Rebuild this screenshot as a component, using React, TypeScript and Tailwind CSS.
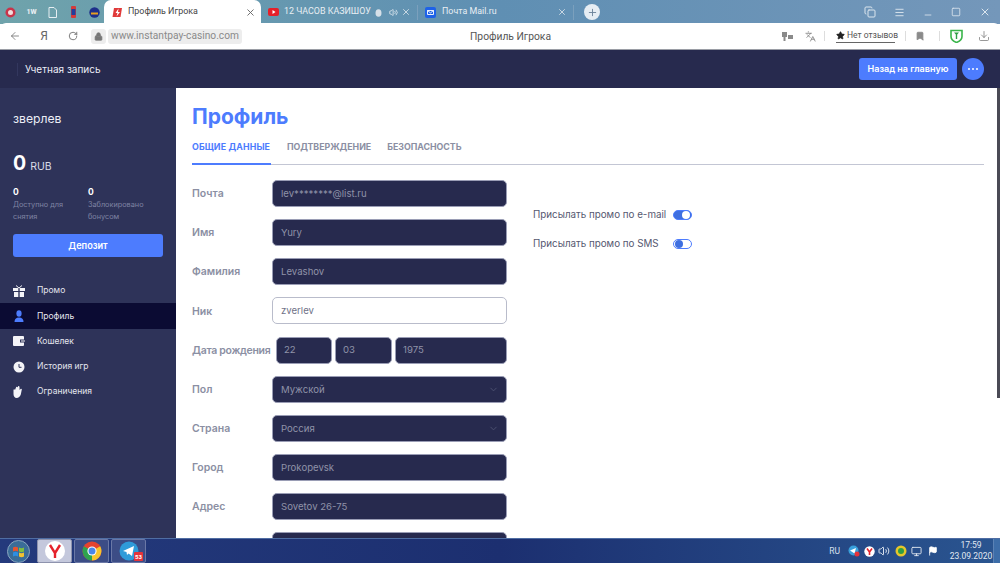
import React from "react";
import { ArrowLeft, RotateCw, Lock, X, Plus, ChevronDown, Menu, Minus, Square, Download, Bookmark, Volume2, Copy, Languages, Flag, Monitor, Star } from "lucide-react";

const chrome = "font-['Roboto',sans-serif]";

function Field({ label, value, active, select }: { label: string; value: string; active?: boolean; select?: boolean }) {
  return (
    <div className="flex items-center h-[27px] mb-[12.16px]">
      <div className="w-20 shrink-0 text-[10.5px] font-semibold text-[#8b8fa3] pt-px">{label}</div>
      <div className={`w-[235px] h-[27px] rounded-[5px] border flex items-center justify-between px-2 text-[9.6px] ${active ? "bg-white border-[#b9bccb] text-[#6f7287]" : "bg-[#272a4e] border-[#9a9db5] text-[#8f92a8]"}`}>
        <span className="pt-px">{value}</span>
        {select && <ChevronDown size={11} className="text-[#4e5272] mr-[-1px]" />}
      </div>
    </div>
  );
}

function DateBox({ value, w }: { value: string; w: string }) {
  return <div className={`${w} h-[27px] rounded-[5px] border border-[#9a9db5] bg-[#272a4e] flex items-center px-[7px] pt-px text-[9.6px] text-[#8f92a8]`}>{value}</div>;
}

function Toggle({ on }: { on: boolean }) {
  return (
    <div className={`w-[19px] h-[10px] rounded-full border border-[#4d7cfe] flex items-center px-[1px] ${on ? "bg-[#3f6fe0] justify-end" : "bg-white justify-start"}`}>
      <div className={`w-[8px] h-[8px] rounded-full ${on ? "bg-white" : "bg-[#3f6fe0]"}`} />
    </div>
  );
}

function NavRow({ icon, label, active }: { icon: React.ReactNode; label: string; active?: boolean }) {
  return (
    <div className={`h-[25.3px] flex items-center pl-[13px] text-[8.5px] ${active ? "bg-[#0b0b33]" : ""}`}>
      <span className="w-[24px] flex items-center">{icon}</span>
      <span className="text-[#e4e5ee]">{label}</span>
    </div>
  );
}

function TabFav({ children }: { children: React.ReactNode }) {
  return <div className="w-[21px] flex justify-center items-center shrink-0">{children}</div>;
}

function YLogo() {
  return (
    <svg width="22" height="22" viewBox="0 0 22 22">
      <circle cx="11" cy="11" r="10" fill="#fff" />
      <path d="M6 5l5 8v5M16 5l-5 8" stroke="#e5222b" strokeWidth="2.4" fill="none" />
    </svg>
  );
}

export default function App() {
  return (
    <div className="w-[1000px] h-[563px] flex flex-col overflow-hidden bg-white">
      {/* tab strip */}
      <div className={`h-[24px] shrink-0 flex items-center bg-gradient-to-r from-[#6fa3ab] via-[#5f8fb3] to-[#7497ba] text-[8.9px] ${chrome}`}>
        <div className="w-[104px] flex items-center shrink-0">
          <TabFav><svg width="11" height="11" viewBox="0 0 11 11"><circle cx="5.5" cy="5.5" r="5" fill="#c8344a" /><circle cx="5.5" cy="5.5" r="2.5" fill="#f3dcdc" /></svg></TabFav>
          <TabFav><span className="text-[7px] font-extrabold text-[#e8eef2]">1W</span></TabFav>
          <TabFav><svg width="9" height="11" viewBox="0 0 9 11"><path d="M1 .5h5l2.5 2.500v7.500H1z" fill="none" stroke="#e6eef2" /></svg></TabFav>
          <TabFav><svg width="7" height="12" viewBox="0 0 7 12"><rect x="1" width="5" height="12" rx="1" fill="#d33a3a" /><rect x="1.500" y="3" width="4" height="6" fill="#1f3f9e" /></svg></TabFav>
          <TabFav><svg width="11" height="11" viewBox="0 0 11 11"><circle cx="5.5" cy="5.5" r="5.2" fill="#1d2f8a" /><path d="M2 6.500h7" stroke="#e8a020" strokeWidth="2" /></svg></TabFav>
        </div>
        <div className="w-[157px] h-[24px] bg-white rounded-t-[7px] flex items-center pl-[8px] pr-[5px] shrink-0 text-[#444]">
          <svg width="11" height="11" viewBox="0 0 11 11"><path d="M2 1h8L8.500 10H.5z" fill="#e03a3a" /><path d="M6.500 1.500L3.500 6h2L4.500 9.500 8 5H6z" fill="#fff" /></svg>
          <span className="ml-[5px] flex-1">Профиль Игрока</span>
          <X size={11} className="text-[#666]" />
        </div>
        <div className="w-[157px] flex items-center pl-[7px] pr-[6px] text-[#e8eef3] shrink-0 border-r border-[#7ba0bd] h-[15px]">
          <svg width="11" height="8" viewBox="0 0 11 8"><rect width="11" height="8" rx="2" fill="#e5202a" /><path d="M4.500 2l3 2-3 2z" fill="#fff" /></svg>
          <span className="ml-[5px] flex-1 whitespace-nowrap">12 ЧАСОВ КАЗИШОУ</span>
          <svg width="7" height="10" viewBox="0 0 7 10"><ellipse cx="3.500" cy="6" rx="3" ry="3.800" fill="#d6e0e8" /></svg>
          <Volume2 size={9} className="ml-[7px] text-[#eef3f7]" />
          <X size={10} className="ml-[3px] text-[#dbe5ec]" />
        </div>
        <div className="w-[156px] flex items-center pl-[7px] pr-[6px] text-[#e8eef3] shrink-0 border-r border-[#7ba0bd] h-[15px]">
          <svg width="11" height="11" viewBox="0 0 11 11"><rect width="11" height="11" rx="2" fill="#1e62e8" /><path d="M2.500 3.500h6v4h-6z M2.500 3.500l3 2.400 3-2.400" stroke="#fff" strokeWidth="0.9" fill="none" /></svg>
          <span className="ml-[6px] flex-1">Почта Mail.ru</span>
          <X size={10} className="text-[#dbe5ec]" />
        </div>
        <div className="w-[16px] h-[16px] ml-[10px] rounded-full bg-[#e6edf3] flex items-center justify-center shrink-0">
          <Plus size={11} className="text-[#6b8299]" />
        </div>
        <div className="flex-1 flex justify-end items-center gap-[18px] pr-[9px] text-[#dce6ee]">
          <Copy size={12} />
          <Menu size={11} />
          <Minus size={10} className="mt-[5px]" />
          <Square size={10} />
          <X size={12} />
        </div>
      </div>

      {/* toolbar */}
      <div className={`h-[27px] shrink-0 bg-white rounded-t-[6px] -mt-[1px] flex items-center relative text-[#555] ${chrome} border-b border-[#9a9da5]`}>
        <ArrowLeft size={12} className="ml-[9px] text-[#666]" strokeWidth={1.5} />
        <span className="ml-[18px] text-[12px] text-[#666] w-[10px] text-center">Я</span>
        <RotateCw size={10} className="ml-[19px] text-[#666]" />
        <div className="ml-[13px] w-[15px] h-[15px] bg-[#ededed] rounded-[3px] flex items-center justify-center"><Lock size={9} className="text-[#777] fill-[#777]" /></div>
        <div className="ml-[2px] h-[15px] w-[134px] bg-[#ededed] rounded-[3px] flex items-center justify-center text-[10.2px] text-[#8a8a8a] whitespace-nowrap">www.instantpay-casino.com</div>
        <div className="absolute left-[470px] top-[6px] text-[10.3px] text-[#555]">Профиль Игрока</div>
        <div className="ml-auto flex items-center text-[#8a8a8a]">
          <svg width="11" height="11" viewBox="0 0 11 11" className="mr-[12px]"><path d="M0 1h5v5H3.500v4h-2V6H0zM6 4h5v4H6z" fill="#8a8a8a" /></svg>
          <Languages size={11} className="mr-[8px]" />
          <div className="w-px h-[10px] bg-[#ddd] mr-[11px]" />
          <div className="flex items-center border-b border-[#666] h-[14px] text-[8.5px] text-[#555] mr-[10px] w-[59px] gap-[2px] whitespace-nowrap">
            <Star size={9} className="fill-[#222] text-[#222] shrink-0" /> Нет отзывов
          </div>
          <div className="w-px h-[10px] bg-[#ddd] mr-[9px]" />
          <Bookmark size={10} className="fill-[#8a8a8a] mr-[14px]" />
          <div className="w-px h-[10px] bg-[#ddd] mr-[10px]" />
          <svg width="13" height="14" viewBox="0 0 13 14" className="mr-[15px]"><path d="M1 1.500h11v6c0 3-3 5-5.500 6C4 12.500 1 10.500 1 7.500z" fill="#fff" stroke="#3ab54a" strokeWidth="1.6" /><path d="M4 3.500h5L7.200 5.500V10H5.800V5.500z" fill="#2d9e43" /></svg>
          <Download size={12} className="mr-[10px] text-[#777]" strokeWidth={1.5} />
        </div>
      </div>

      {/* page */}
      <div className="flex-1 min-h-0 flex flex-col relative font-['Inter',sans-serif]">
        <header className="h-[38px] shrink-0 bg-[#272a4e] flex items-center pl-[17px] pr-[16px]">
          <div className="w-px h-[13px] bg-[#33375e] mr-[7px]" />
          <span className="text-[10px] text-[#eceef6]">Учетная запись</span>
          <button className="ml-auto w-[98px] h-[22px] bg-[#4d7cfe] rounded-[3px] text-white text-[9px] font-semibold">Назад на главную</button>
          <div className="ml-[5px] w-[22px] h-[22px] rounded-full bg-[#4d7cfe] flex items-center justify-center gap-[1.5px]">
            <i className="w-[2.5px] h-[2.5px] rounded-full bg-white" /><i className="w-[2.5px] h-[2.5px] rounded-full bg-white" /><i className="w-[2.5px] h-[2.5px] rounded-full bg-white" />
          </div>
        </header>
        <div className="flex-1 min-h-0 flex">
          <aside className="w-[176px] shrink-0 bg-[#2e3359]">
            <div className="px-[13px] pt-[23px]">
              <div className="text-[12.2px] text-[#eceef6] leading-[16px]">зверлев</div>
              <div className="mt-[24px] flex items-baseline">
                <span className="text-[19.5px] font-bold text-white leading-[24px]">0</span>
                <span className="ml-[4px] text-[10.5px] text-[#d9dbe8]">RUB</span>
              </div>
              <div className="mt-[11px] flex">
                <div className="w-[75px]">
                  <div className="text-[8.5px] font-bold text-white leading-[12px]">0</div>
                  <div className="text-[7.3px] text-[#7f83a3] leading-[12px] mt-px">Доступно для<br />снятия</div>
                </div>
                <div>
                  <div className="text-[8.5px] font-bold text-white leading-[12px]">0</div>
                  <div className="text-[7.3px] text-[#7f83a3] leading-[12px] mt-px">Заблокировано<br />бонусом</div>
                </div>
              </div>
              <button className="mt-[11px] w-[150px] h-[23px] bg-[#4d7cfe] rounded-[3px] text-white text-[9.2px] font-semibold">Депозит</button>
            </div>
            <nav className="mt-[21px]">
              <NavRow label="Промо" icon={
                <svg width="12" height="12" viewBox="0 0 12 12"><path d="M0 3h12v3H0zM1 7h10v5H1z" fill="#f4f4f8" /><path d="M5.300 3h1.400v9H5.300z" fill="#2e3359" /><path d="M3 .5L6 3l3-2.500" stroke="#f4f4f8" fill="none" /></svg>
              } />
              <NavRow active label="Профиль" icon={
                <svg width="12" height="12" viewBox="0 0 12 12"><ellipse cx="6" cy="3.500" rx="2.600" ry="3.200" fill="#4d7cfe" /><path d="M1.500 12c0-3 1.500-4.500 4.500-4.500s4.500 1.500 4.500 4.500z" fill="#4d7cfe" /></svg>
              } />
              <NavRow label="Кошелек" icon={
                <svg width="12" height="10" viewBox="0 0 12 10"><rect width="11" height="10" rx="1" fill="#f4f4f8" /><rect x="7" y="3.500" width="5" height="3" fill="#2e3359" /><rect x="8" y="4.500" width="4" height="1" fill="#f4f4f8" /></svg>
              } />
              <NavRow label="История игр" icon={
                <svg width="12" height="12" viewBox="0 0 12 12"><circle cx="6" cy="6" r="5.500" fill="#f4f4f8" /><path d="M6 3v3.300h2.500" stroke="#2e3359" fill="none" /></svg>
              } />
              <NavRow label="Ограничения" icon={
                <svg width="10" height="12" viewBox="0 0 10 12"><path d="M3 1.500c0-1 1.500-1 1.700 0L5 .5c.3-.7 1.500-.5 1.500.5l.1 3 1-1c.8-.5 1.600.2 1.100 1L7.800 8.500C7 10.800 5.500 12 3.800 12 1.500 12 .5 10 .5 8V4c0-1 1.300-1 1.500 0z" fill="#f4f4f8" /></svg>
              } />
            </nav>
          </aside>
          <main className="flex-1 min-w-0 overflow-hidden bg-white pl-[16px] pr-[16px] relative">
            <h1 className="mt-[15px] text-[21px] leading-[28px] font-bold text-[#4d7cfe]">Профиль</h1>
            <div className="mt-[6px] h-[28px] border-b border-[#c3c6d4] flex text-[8.8px] font-bold text-[#8b8fa3] leading-[20px]">
              <span className="text-[#4d7cfe] border-b-2 border-[#4d7cfe] h-[28px] w-[79px] whitespace-nowrap tracking-[0.15px]">ОБЩИЕ ДАННЫЕ</span>
              <span className="ml-[16px]">ПОДТВЕРЖДЕНИЕ</span>
              <span className="ml-[16px]">БЕЗОПАСНОСТЬ</span>
            </div>
            <div className="mt-[15px] flex">
              <div className="w-[315px] shrink-0">
                <Field label="Почта" value="lev********@list.ru" />
                <Field label="Имя" value="Yury" />
                <Field label="Фамилия" value="Levashov" />
                <Field label="Ник" value="zverlev" active />
                <div className="flex items-center h-[27px] mb-[12.16px]">
                  <div className="w-[84px] shrink-0 text-[10.5px] font-semibold text-[#8b8fa3] whitespace-nowrap tracking-[-0.3px] pt-px">Дата рождения</div>
                  <div className="flex gap-[3px]">
                    <DateBox value="22" w="w-[56px]" />
                    <DateBox value="03" w="w-[57px]" />
                    <DateBox value="1975" w="w-[112px]" />
                  </div>
                </div>
                <Field label="Пол" value="Мужской" select />
                <Field label="Страна" value="Россия" select />
                <Field label="Город" value="Prokopevsk" />
                <Field label="Адрес" value="Sovetov 26-75" />
                <Field label="" value="" />
              </div>
              <div className="ml-[26px] pt-[28px] text-[9.8px] text-[#555870] whitespace-nowrap">
                <div className="flex items-center h-[14px] w-[200px]">
                  <span className="w-[140px]">Присылать промо по e-mail</span>
                  <Toggle on />
                </div>
                <div className="flex items-center h-[14px] mt-[15px]">
                  <span className="w-[140px]">Присылать промо по SMS</span>
                  <Toggle on={false} />
                </div>
              </div>
            </div>
            <div className="absolute right-0 top-0 h-[310px] w-[3px] bg-[#4a4a55]" />
          </main>
        </div>
      </div>

      {/* taskbar */}
      <div className={`h-[25px] shrink-0 bg-gradient-to-r from-[#243a7c] via-[#1c2f70] to-[#2a5590] border-t border-[#4f6da3] flex items-center ${chrome}`}>
        <div className="w-[37px] flex justify-center shrink-0">
          <svg width="23" height="23" viewBox="0 0 23 23">
            <circle cx="11.500" cy="11.500" r="11" fill="#3a6d98" stroke="#8aa4bf" />
            <path d="M6 7.500q2.500-1.500 5 0v4q-2.500-1.500-5 0z" fill="#e8552f" /><path d="M12 7.500q2.500 1.500 5 0v4q-2.500 1.500-5 0z" fill="#7fbf3f" /><path d="M6 12.500q2.500-1.500 5 0v4q-2.500-1.500-5 0z" fill="#2f8fe0" /><path d="M12 12.500q2.500 1.500 5 0v4q-2.500 1.500-5 0z" fill="#f2c230" />
          </svg>
        </div>
        <div className="w-[35px] h-[24px] bg-[#c4c8dc] border border-[#8e93ad] rounded-[2px] flex items-center justify-center shrink-0"><YLogo /></div>
        <div className="ml-[2px] w-[35px] h-[24px] bg-[#3c4d86] border border-[#6a78a6] rounded-[2px] flex items-center justify-center shrink-0">
          <svg width="20" height="20" viewBox="0 0 20 20">
            <circle cx="10" cy="10" r="9.500" fill="#e4432f" />
            <path d="M10 10L1.800 5.300A9.500 9.500 0 0 0 10 19.500z" fill="#2ea34f" />
            <path d="M10 10L18.200 5.300A9.500 9.500 0 0 1 10 19.500z" fill="#f7c52c" />
            <circle cx="10" cy="10" r="4.600" fill="#fff" /><circle cx="10" cy="10" r="3.500" fill="#4a86e8" />
          </svg>
        </div>
        <div className="ml-[2px] w-[35px] h-[24px] bg-[#3c4d86] border border-[#6a78a6] rounded-[2px] flex items-center justify-center relative shrink-0">
          <svg width="20" height="20" viewBox="0 0 20 20"><circle cx="10" cy="10" r="9.500" fill="#2f9bd9" /><path d="M4 10l11-5-2 10-3.500-2.500L8 14l-.5-3z" fill="#fff" /></svg>
          <span className="absolute right-[2px] bottom-[1px] bg-[#e5333a] text-white text-[6px] font-bold leading-[9px] px-[1px] rounded-[1px]">53</span>
        </div>
        <div className="ml-auto flex items-center text-[#d8e2ee]">
          <span className="text-[8.5px] mr-[8px]">RU</span>
          <svg width="12" height="12" viewBox="0 0 12 12" className="mr-[4px]"><circle cx="5.500" cy="5.500" r="5" fill="#39a0dc" /><path d="M2 5.500l6-2.500-1.500 5.500z" fill="#fff" /><circle cx="9" cy="9" r="2.500" fill="#e5333a" /></svg>
          <svg width="11" height="11" viewBox="0 0 11 11" className="mr-[3px]"><circle cx="5.500" cy="5.500" r="5.200" fill="#fff" /><path d="M3 2.500l2.500 3.500v3M8 2.500L5.500 6" stroke="#e5222b" strokeWidth="1.600" fill="none" /></svg>
          <Volume2 size={12} className="mr-[5px] text-[#dbe3ee]" />
          <svg width="12" height="12" viewBox="0 0 12 12" className="mr-[4px]"><circle cx="6" cy="6" r="5.500" fill="#e6c62a" /><circle cx="6" cy="6" r="3" fill="#2f9e44" /></svg>
          <Monitor size={11} className="mr-[6px] text-[#e2e8f0]" />
          <Flag size={10} className="mr-[11px] text-white fill-white" />
          <div className="w-[44px] text-center text-[8.5px] leading-[11px] text-[#e1e8f2]"><div>17:59</div><div>23.09.2020</div></div>
          <div className="w-[7px] h-[24px] bg-[#3d6da8] border-l border-[#5b82b5]" />
        </div>
      </div>
    </div>
  );
}
